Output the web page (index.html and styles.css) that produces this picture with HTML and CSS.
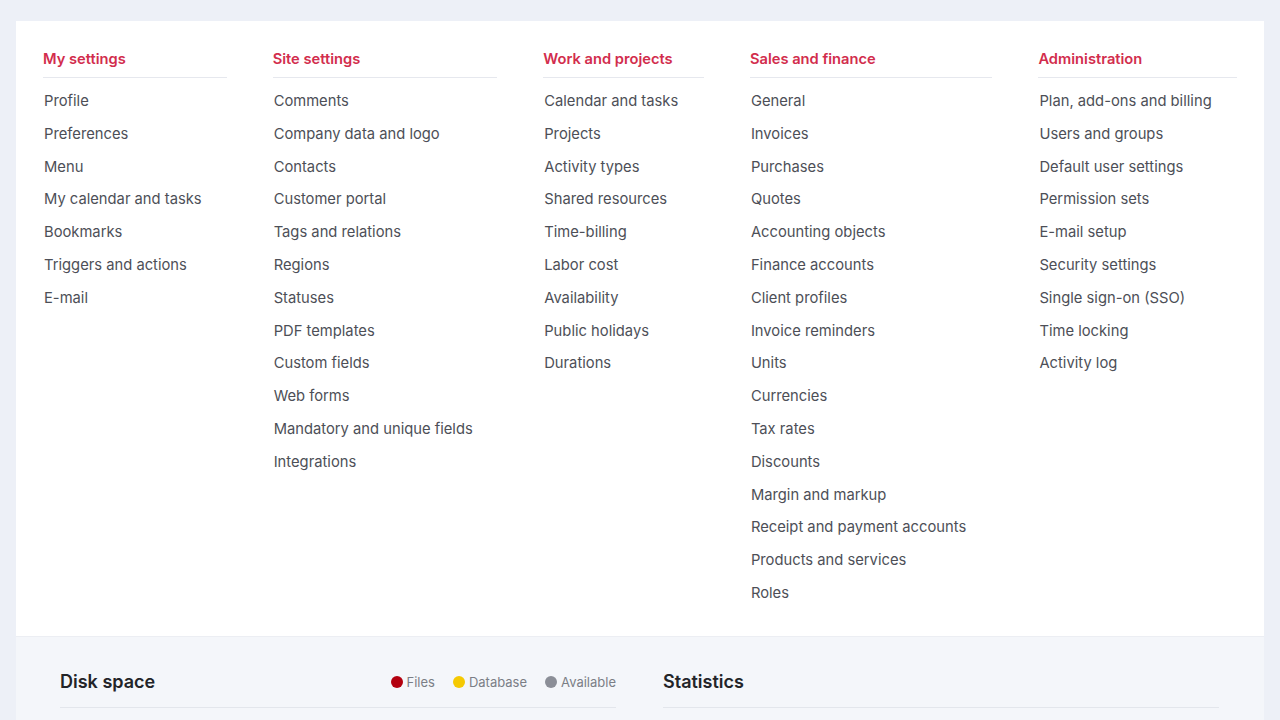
FILE: index.html
```html
<!DOCTYPE html>
<html lang="en">
<head>
<meta charset="utf-8">
<title>Settings</title>
<link rel="stylesheet" href="styles.css">
</head>
<body>
<div class="page">
  <div class="card">
    <div class="settings">
      <div class="col col-1">
        <h3 class="col-title">My settings</h3>
        <ul class="links">
          <li>Profile</li>
          <li>Preferences</li>
          <li>Menu</li>
          <li>My calendar and tasks</li>
          <li>Bookmarks</li>
          <li>Triggers and actions</li>
          <li>E-mail</li>
        </ul>
      </div>
      <div class="col col-2">
        <h3 class="col-title">Site settings</h3>
        <ul class="links">
          <li>Comments</li>
          <li>Company data and logo</li>
          <li>Contacts</li>
          <li>Customer portal</li>
          <li>Tags and relations</li>
          <li>Regions</li>
          <li>Statuses</li>
          <li>PDF templates</li>
          <li>Custom fields</li>
          <li>Web forms</li>
          <li>Mandatory and unique fields</li>
          <li>Integrations</li>
        </ul>
      </div>
      <div class="col col-3">
        <h3 class="col-title">Work and projects</h3>
        <ul class="links">
          <li>Calendar and tasks</li>
          <li>Projects</li>
          <li>Activity types</li>
          <li>Shared resources</li>
          <li>Time-billing</li>
          <li>Labor cost</li>
          <li>Availability</li>
          <li>Public holidays</li>
          <li>Durations</li>
        </ul>
      </div>
      <div class="col col-4">
        <h3 class="col-title">Sales and finance</h3>
        <ul class="links">
          <li>General</li>
          <li>Invoices</li>
          <li>Purchases</li>
          <li>Quotes</li>
          <li>Accounting objects</li>
          <li>Finance accounts</li>
          <li>Client profiles</li>
          <li>Invoice reminders</li>
          <li>Units</li>
          <li>Currencies</li>
          <li>Tax rates</li>
          <li>Discounts</li>
          <li>Margin and markup</li>
          <li>Receipt and payment accounts</li>
          <li>Products and services</li>
          <li>Roles</li>
        </ul>
      </div>
      <div class="col col-5">
        <h3 class="col-title">Administration</h3>
        <ul class="links">
          <li>Plan, add-ons and billing</li>
          <li>Users and groups</li>
          <li>Default user settings</li>
          <li>Permission sets</li>
          <li>E-mail setup</li>
          <li>Security settings</li>
          <li>Single sign-on (SSO)</li>
          <li>Time locking</li>
          <li>Activity log</li>
        </ul>
      </div>
    </div>
    <div class="stats">
      <div class="panel">
        <div class="panel-head">
          <h2 class="panel-title">Disk space</h2>
          <div class="legend">
            <span class="legend-item"><span class="dot dot-files"></span>Files</span>
            <span class="legend-item"><span class="dot dot-db"></span>Database</span>
            <span class="legend-item"><span class="dot dot-avail"></span>Available</span>
          </div>
        </div>
      </div>
      <div class="panel">
        <div class="panel-head">
          <h2 class="panel-title">Statistics</h2>
        </div>
      </div>
    </div>
  </div>
</div>
</body>
</html>
```
FILE: styles.css
```css
* { box-sizing: border-box; }
html, body { margin: 0; padding: 0; }
body {
  background: #edf0f7;
  font-family: Inter, "Noto Sans", sans-serif;
  color: #4a4c54;
  height: 720px;
  overflow: hidden;
}
.page {
  padding: 21px 16px 0 16px;
}
.card {
  background: #ffffff;
  width: 1248px;
}
.settings {
  display: flex;
  gap: 46px;
  padding: 28px 27px 26px 27px;
}
.col-1 { width: 184px; }
.col-2 { width: 225px; }
.col-3 { width: 161px; }
.col-4 { width: 243px; }
.col-5 { width: 199px; }
.col-title {
  margin: 0;
  font-size: 14.7px;
  line-height: 20px;
  font-weight: 600;
  color: #d22d4d;
  padding-bottom: 8px;
  border-bottom: 1px solid #e6e8ee;
}
.links {
  list-style: none;
  margin: 7px 0 0 0;
  padding: 0;
}
.links li {
  font-size: 14.75px;
  line-height: 32.8px;
  color: #4d4f57;
  padding-left: 1px;
  white-space: nowrap;
}
.stats {
  background: #f4f6fa;
  display: flex;
  gap: 47px;
  padding: 33px 44px 0 44px;
  height: 90px;
  border-top: 1px solid #eceef3;
}
.panel { width: 556px; }
.panel-head {
  display: flex;
  align-items: center;
  justify-content: space-between;
  padding-bottom: 13px;
  border-bottom: 1px solid #e3e6ec;
}
.panel-title {
  margin: 0;
  font-size: 18px;
  line-height: 24px;
  font-weight: 600;
  color: #232428;
}
.legend {
  display: flex;
  align-items: center;
  gap: 18px;
  font-size: 13px;
  color: #7b7e86;
}
.legend-item {
  display: flex;
  align-items: center;
  gap: 4px;
}
.dot {
  width: 12px;
  height: 12px;
  border-radius: 50%;
  display: inline-block;
}
.dot-files { background: #b3000f; }
.dot-db { background: #f5c902; }
.dot-avail { background: #8b8e97; }
```
